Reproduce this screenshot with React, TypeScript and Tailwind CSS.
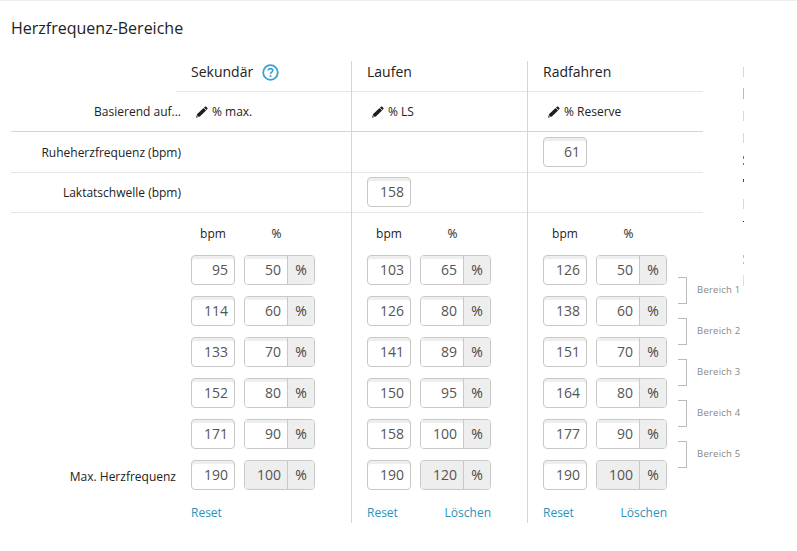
const columns = [
  { name: "Sekundär", help: true, basis: "% max.", rest: "", threshold: "", clear: false,
    rows: [[95, 50], [114, 60], [133, 70], [152, 80], [171, 90], [190, 100]] },
  { name: "Laufen", help: false, basis: "% LS", rest: "", threshold: "158", clear: true,
    rows: [[103, 65], [126, 80], [141, 89], [150, 95], [158, 100], [190, 120]] },
  { name: "Radfahren", help: false, basis: "% Reserve", rest: "61", threshold: "", clear: true,
    rows: [[126, 50], [138, 60], [151, 70], [164, 80], [177, 90], [190, 100]] },
];

function Pencil() {
  return (
    <svg className="ml-[5px] mr-[4px] h-3 w-3" viewBox="0 0 12 12" fill="#1c1c1c">
      <path d="M0 11.7 1.2 8.1 7.6 2 10.1 4.5 3.8 10.6Z" />
      <path d="M8 1.6 9.2.6Q9.7.2 10.1.6L11.4 1.9Q11.8 2.4 11.4 2.9L10.5 4.1Z" />
      <path d="M1.5 9.2 2.7 10.4 1.3 10.7Z" fill="#fff" />
    </svg>
  );
}

function Help() {
  return (
    <svg className="ml-[9px] h-[17px] w-[17px]" viewBox="0 0 17 17" fill="none" stroke="#36a2d6">
      <circle cx="8.5" cy="8.5" r="7.3" strokeWidth="1.8" />
      <path d="M6.1 6.4Q6.3 4.6 8.5 4.6 10.8 4.6 10.8 6.5 10.8 7.5 9.6 8.2 8.5 8.9 8.5 10" strokeWidth="1.6" />
      <path d="M8.5 11.1V12.8" strokeWidth="1.8" />
    </svg>
  );
}

function Field({ value }: { value: string | number }) {
  return (
    <div className="flex h-[30px] w-[44px] items-center justify-end rounded-[4px] border border-[#c8c8c8] bg-white pr-[6px] text-[14px] text-[#555] shadow-[inset_0_3px_0_#eeeeee]">
      {value}
    </div>
  );
}

function PercentField({ value, disabled }: { value: number; disabled: boolean }) {
  return (
    <div className="flex h-[30px] w-[71px] overflow-hidden rounded-[4px] border border-[#c8c8c8] text-[14px]">
      <div className={`flex w-[43px] items-center justify-end border-r border-[#c8c8c8] pr-[6px] text-[#555] ${disabled ? "bg-[#eee]" : "bg-white shadow-[inset_0_3px_0_#eeeeee]"}`}>
        {value}
      </div>
      <div className="flex flex-1 items-center justify-center bg-[#eee] text-[14px] text-[#444]">%</div>
    </div>
  );
}

function Column({ c, last }: { c: (typeof columns)[number]; last: boolean }) {
  return (
    <section className={`flex h-[462px] shrink-0 flex-col ${last ? "w-[175px]" : "w-[176px] border-r border-[#d5d5d5]"}`}>
      <div className="flex h-[31px] shrink-0 items-center border-b border-[#e6e6e6] pb-[8px] pl-[15px] text-[14px]">
        {c.name}
        {c.help && <Help />}
      </div>
      <div className="flex h-10 shrink-0 items-center border-b border-[#d5d5d5] pl-[15px] pt-px">
        <Pencil />
        {c.basis}
      </div>
      <div className="h-[41px] shrink-0 border-b border-[#e6e6e6] pl-[15px] pt-[5px]">{c.rest && <Field value={c.rest} />}</div>
      <div className="h-10 shrink-0 border-b border-[#e6e6e6] pl-[15px] pt-[4px]">{c.threshold && <Field value={c.threshold} />}</div>
      <div className="flex h-[42px] shrink-0 items-center pl-[15px]">
        <span className="w-[44px] text-center">bpm</span>
        <span className="ml-[9px] w-[65px] text-center">%</span>
      </div>
      <div className="flex shrink-0 flex-col gap-[11px] pl-[15px]">
        {c.rows.map(([bpm, pct], i) => (
          <div key={i} className="flex gap-[9px]">
            <Field value={bpm} />
            <PercentField value={pct} disabled={i === 5} />
          </div>
        ))}
      </div>
      <div className="ml-[15px] mt-[15px] flex w-[124px] shrink-0 justify-between text-[#2a93bd]">
        <a>Reset</a>
        {c.clear && <a>Löschen</a>}
      </div>
    </section>
  );
}

export default function App() {
  return (
    <main className="h-[551px] w-[797px] overflow-hidden border-t border-[#eee] bg-white font-['Open_Sans',sans-serif] text-[12px] leading-4 text-[#222]">
      <h1 className="ml-[11px] mt-[15px] h-[24px] text-[16px] leading-[24px]">Herzfrequenz-Bereiche</h1>
      <div className="ml-[11px] mt-[21px] flex items-start">
        <div className="flex w-[165px] flex-col whitespace-nowrap">
          <div className="flex h-[71px] items-end justify-end border-b border-[#d5d5d5] pb-[11px]"><span className="-mr-[5px]">Basierend auf...</span></div>
          <div className="flex h-[41px] items-center justify-end border-b border-[#e6e6e6] pt-px"><span className="-mr-[5px]">Ruheherzfrequenz (bpm)</span></div>
          <div className="flex h-10 items-center justify-end border-b border-[#e6e6e6]"><span className="-mr-[5px]">Laktatschwelle (bpm)</span></div>
          <div className="mt-[256px] text-right">Max. Herzfrequenz</div>
        </div>
        {columns.map((c, i) => <Column key={c.name} c={c} last={i === 2} />)}
        <div className="-ml-[25px] mt-[216px] flex w-[65px] flex-col gap-[14px]">
          {[1, 2, 3, 4, 5].map((n) => (
            <div key={n} className="flex h-[27px] whitespace-nowrap text-[9.5px] leading-[26px] tracking-[0.24px] text-[#888]">
              <span className="mr-[10px] h-[27px] w-[9px] border-y border-r border-[#bbb]" />
              Bereich {n}
            </div>
          ))}
        </div>
        <div className="mt-[6px] flex w-px flex-col">
          <i className="h-[10px] bg-[#ecd9a5]" />
          <i className="mt-[11px] h-[11px] bg-[#d9b777]" />
          <i className="mt-[12px] h-[10px] bg-[#ecd9a5]" />
          <i className="mt-[12px] h-[10px] bg-[#ecd9a5]" />
          <i className="mt-[13px] h-[3px] bg-[#777]" />
          <i className="mt-[4px] h-[2px] bg-[#777]" />
          <i className="mt-[14px] h-[3px] bg-[#444]" />
          <i className="mt-[17px] h-[10px] bg-[#ecd9a5]" />
          <i className="mt-[12px] h-px bg-[#222]" />
          <i className="mt-[33px] h-[3px] bg-[#bbb]" />
          <i className="mt-[4px] h-[2px] bg-[#bbb]" />
          <i className="mt-[11px] h-[11px] bg-[#f0d5e6]" />
        </div>
      </div>
    </main>
  );
}
